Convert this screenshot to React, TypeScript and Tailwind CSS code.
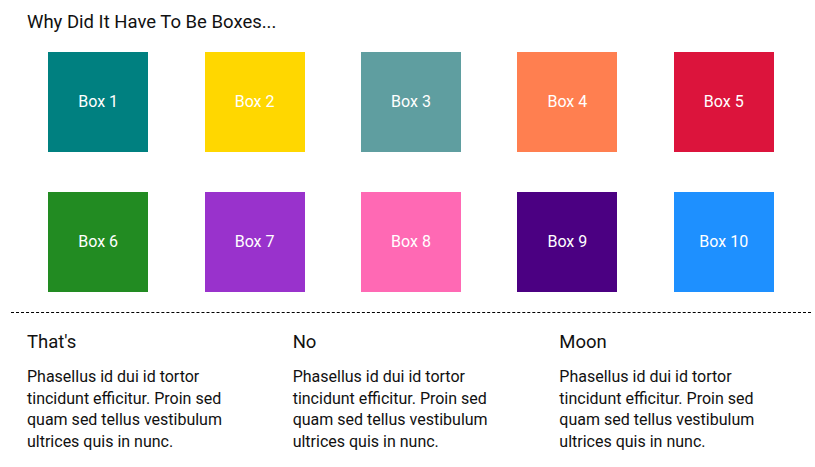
import React from "react";

const BOXES = [
  { n: 1, c: "bg-[#008080]" },
  { n: 2, c: "bg-[#ffd700]" },
  { n: 3, c: "bg-[#5f9ea0]" },
  { n: 4, c: "bg-[#ff7f50]" },
  { n: 5, c: "bg-[#dc143c]" },
  { n: 6, c: "bg-[#228b22]" },
  { n: 7, c: "bg-[#9932cc]" },
  { n: 8, c: "bg-[#ff69b4]" },
  { n: 9, c: "bg-[#4b0082]" },
  { n: 10, c: "bg-[#1e90ff]" },
];

const COLS = ["That's", "No", "Moon"];

export default function App() {
  const rows = [BOXES.slice(0, 5), BOXES.slice(5)];
  return (
    <div className="min-h-screen bg-white text-[#111] font-['Roboto',sans-serif]">
      <h1 className="px-[27px] pt-[12px] text-[18.5px] leading-[21px] font-normal">
        Why Did It Have To Be Boxes...
      </h1>

      {/* caixas */}
      <div className="mt-[19px] ml-[20px] w-[782px] flex flex-col gap-[40px]">
        {rows.map((row, i) => (
          <div key={i} className="flex justify-around">
            {row.map((b) => (
              <div
                key={b.n}
                className={`w-[100px] h-[100px] ${b.c} flex items-center justify-center text-white text-[16px]`}
              >
                Box {b.n}
              </div>
            ))}
          </div>
        ))}
      </div>

      <div className="mt-[20px] ml-[11px] w-[800px] border-t border-dashed border-black grid grid-cols-3">
        {COLS.map((t) => (
          <div key={t} className="pl-[16px] pt-[18px] -ml-px first:ml-0">
            <h2 className="text-[18.5px] leading-[22px] font-normal">{t}</h2>
            <p className="mt-[13px] w-[205px] text-[16px] leading-[21.7px]">
              Phasellus id dui id tortor tincidunt efficitur. Proin sed quam sed tellus vestibulum ultrices quis in nunc.
            </p>
          </div>
        ))}
      </div>
    </div>
  );
}
